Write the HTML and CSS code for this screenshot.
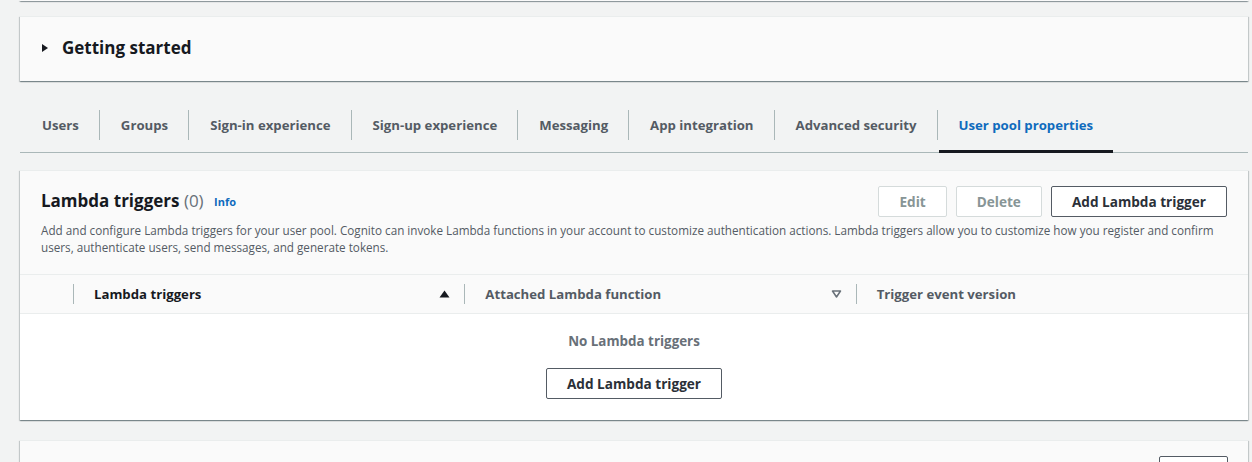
FILE: index.html
```html
<!DOCTYPE html>
<html>
<head>
<meta charset="utf-8">
<link rel="stylesheet" href="styles.css">
</head>
<body>
<div class="page">
  <div class="prev-card"></div>

  <div class="card expander">
    <svg class="caret" width="8" height="10" viewBox="0 0 8 10"><path d="M1 1 L7 5 L1 9 Z" fill="#16191f"/></svg>
    <span class="expander-title">Getting started</span>
  </div>

  <nav class="tabs">
    <a class="tab first"><span class="tab-inner">Users</span></a>
    <a class="tab"><span class="tab-inner">Groups</span></a>
    <a class="tab"><span class="tab-inner">Sign-in experience</span></a>
    <a class="tab"><span class="tab-inner">Sign-up experience</span></a>
    <a class="tab"><span class="tab-inner">Messaging</span></a>
    <a class="tab"><span class="tab-inner">App integration</span></a>
    <a class="tab"><span class="tab-inner">Advanced security</span></a>
    <a class="tab active"><span class="tab-inner">User pool properties</span></a>
  </nav>

  <section class="card lambda">
    <div class="card-header">
      <div class="header-row">
        <h2 class="title">Lambda triggers <span class="count">(0)</span> <a class="info">Info</a></h2>
        <div class="actions">
          <button class="btn disabled">Edit</button>
          <button class="btn disabled">Delete</button>
          <button class="btn">Add Lambda trigger</button>
        </div>
      </div>
      <p class="desc">Add and configure Lambda triggers for your user pool. Cognito can invoke Lambda functions in your account to customize authentication actions. Lambda triggers allow you to customize how you register and confirm users, authenticate users, send messages, and generate tokens.</p>
    </div>
    <div class="thead">
      <div class="th sel"></div>
      <div class="th sorted"><span>Lambda triggers</span>
        <svg class="sort" width="11" height="8" viewBox="0 0 11 8"><path d="M5.5 0.5 L10.5 7.5 L0.5 7.5 Z" fill="#16191f"/></svg>
      </div>
      <div class="th"><span>Attached Lambda function</span>
        <svg class="sort" width="11" height="8" viewBox="0 0 11 8"><path d="M1.5 1 L9.5 1 L5.5 7 Z" fill="none" stroke="#687078" stroke-width="1.5" stroke-linejoin="round"/></svg>
      </div>
      <div class="th"><span>Trigger event version</span></div>
    </div>
    <div class="tbody">
      <div class="empty">No Lambda triggers</div>
      <button class="btn">Add Lambda trigger</button>
    </div>
  </section>

  <section class="card next">
    <div class="next-header">
      <button class="btn blank" aria-label="Edit"></button>
    </div>
  </section>
</div>
</body>
</html>
```

FILE: styles.css
```css
* { box-sizing: border-box; }
html, body {
  margin: 0;
  padding: 0;
  background: #f2f3f3;
  font-family: "Open Sans", "Noto Sans", sans-serif;
  color: #16191f;
  overflow: hidden;
}
.page {
  padding: 0 4px 0 20px;
}
.card {
  background: #fafafa;
  box-shadow: 0 1px 1px 0 rgba(0,28,36,.3), 1px 1px 1px 0 rgba(0,28,36,.15), -1px 1px 1px 0 rgba(0,28,36,.15);
  border-top: 1px solid #eaeded;
}
.prev-card {
  height: 1px;
  background: #fafafa;
  box-shadow: 0 1px 1px 0 rgba(0,28,36,.3), 1px 1px 1px 0 rgba(0,28,36,.15), -1px 1px 1px 0 rgba(0,28,36,.15);
}
.expander {
  margin-top: 15px;
  height: 65px;
  display: flex;
  align-items: center;
  padding-left: 21px;
  padding-bottom: 2px;
}
.caret { margin-right: 13px; }
.expander-title {
  font-size: 17px;
  font-weight: 700;
  line-height: 22px;
  color: #16191f;
}
.tabs {
  margin-top: 17px;
  display: flex;
  border-bottom: 1px solid #aab7b8;
}
.tab {
  position: relative;
  padding: 12px 0 12px;
  font-size: 13.2px;
  font-weight: 700;
  color: #545b64;
}
.tab-inner {
  display: block;
  border-left: 1px solid #aab7b8;
  padding: 5px 20px 5px 21px;
  line-height: 20px;
}
.tab.first .tab-inner { border-left-color: transparent; }
.tab.active { color: #0f6bbd; }
.tab.active::after {
  content: "";
  position: absolute;
  left: 2px;
  right: 0;
  bottom: -1px;
  height: 3px;
  background: #16191f;
}
.lambda {
  margin-top: 17px;
}
.card-header {
  padding: 15px 21px 18px 21px;
}
.header-row {
  display: flex;
  justify-content: space-between;
  align-items: center;
}
.title {
  margin: 0;
  font-size: 17px;
  font-weight: 700;
  line-height: 22px;
}
.count { font-weight: 400; color: #687078; }
.info {
  font-size: 11px;
  font-weight: 700;
  color: #0f6bbd;
  margin-left: 6px;
  vertical-align: 1px;
}
.actions { display: flex; gap: 9px; }
.btn {
  font-family: inherit;
  font-size: 13.6px;
  font-weight: 700;
  line-height: 20px;
  height: 31px;
  padding: 4px 20px;
  background: #fff;
  border: 1px solid #545b64;
  border-radius: 2px;
  color: #2b3038;
}
.btn.disabled {
  border-color: #d5dbdb;
  color: #879596;
}
.btn.blank { width: 69px; }
.desc {
  margin: 5px 0 0;
  font-size: 11.7px;
  line-height: 17px;
  color: #545b64;
}
.thead {
  display: grid;
  grid-template-columns: 54px 1fr 1fr 1fr;
  border-top: 1px solid #eaeded;
  border-bottom: 1px solid #eaeded;
  height: 40px;
  align-items: center;
}
.th {
  display: flex;
  align-items: center;
  justify-content: space-between;
  height: 20px;
  padding: 0 14px 0 20px;
  border-right: 1px solid #aab7b8;
  font-size: 13.2px;
  font-weight: 700;
  color: #545b64;
}
.th:last-child { border-right: none; }
.th.sorted { color: #16191f; }
.tbody {
  background: #fff;
  display: flex;
  flex-direction: column;
  align-items: center;
  padding: 17px 0 21px;
}
.empty {
  font-size: 13.4px;
  font-weight: 700;
  line-height: 20px;
  color: #687078;
  margin-bottom: 17px;
}
.next {
  margin-top: 20px;
  height: 60px;
}
.next-header {
  display: flex;
  justify-content: flex-end;
  padding: 15px 20px 0 0;
}
```
